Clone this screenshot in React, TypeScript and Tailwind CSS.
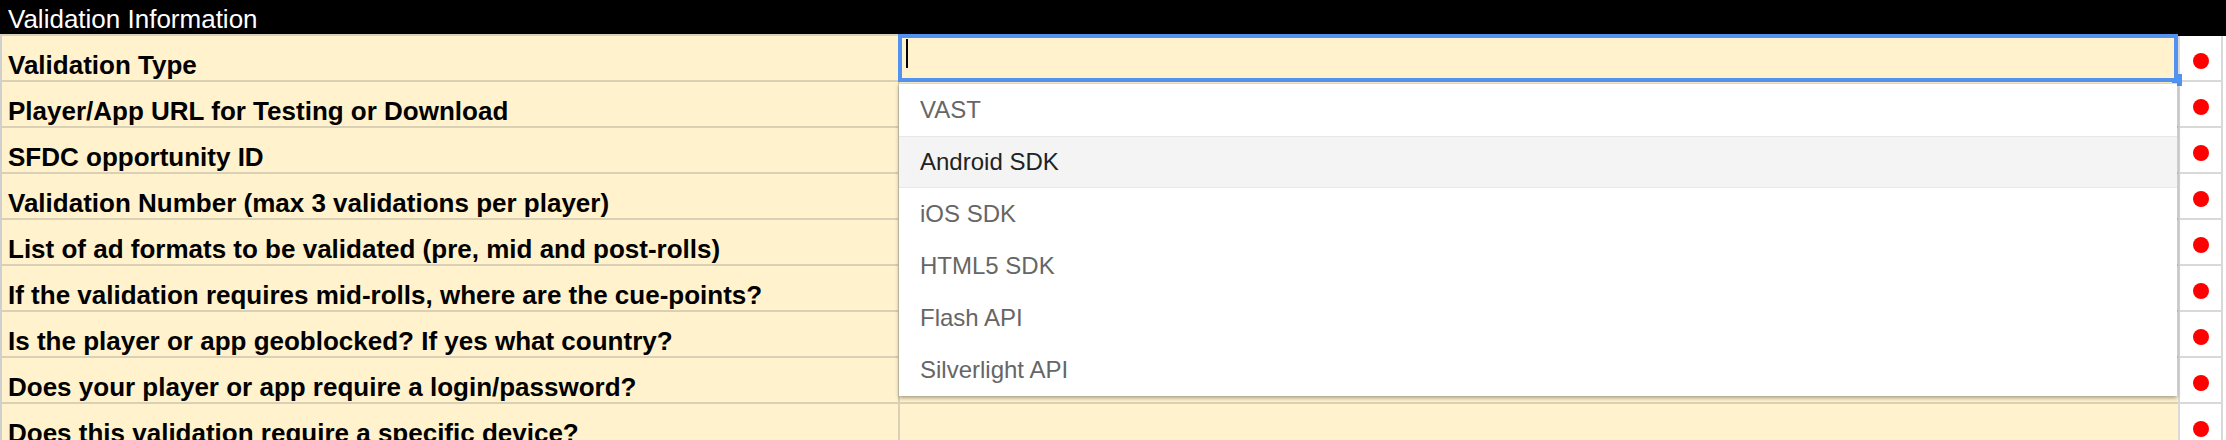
import React from 'react'

const labels = [
  'Validation Type',
  'Player/App URL for Testing or Download',
  'SFDC opportunity ID',
  'Validation Number (max 3 validations per player)',
  'List of ad formats to be validated (pre, mid and post-rolls)',
  'If the validation requires mid-rolls, where are the cue-points?',
  'Is the player or app geoblocked? If yes what country?',
  'Does your player or app require a login/password?',
  'Does this validation require a specific device?',
]

const options = ['VAST', 'Android SDK', 'iOS SDK', 'HTML5 SDK', 'Flash API', 'Silverlight API']

export default function App() {
  return (
    <div className="relative w-[2226px] h-[440px] overflow-hidden bg-white font-['Liberation_Sans',Arial,sans-serif]">
      {/* header */}
      <div className="flex h-[36px]">
        <div className="w-[2178px] h-[36px] bg-black border-b-2 border-[#d9d0b6] pl-[8px] pt-[4px] text-white text-[26px] leading-[30px]">
          Validation Information
        </div>
        <div className="flex-1 bg-black" />
      </div>

      {/* rows */}
      {labels.map((label) => (
        <div key={label} className="flex h-[46px]">
          <div className="w-[900px] shrink-0 bg-[#fff2cc] border-l-2 border-l-[#cfcfcf] border-r-2 border-r-[#d9d0b6] border-b-2 border-b-[#d9d0b6] flex items-end pl-[6px] text-[26px] leading-[30px] font-bold text-black whitespace-nowrap">
            {label}
          </div>
          <div className="w-[1278px] shrink-0 bg-[#fff2cc] border-b-2 border-[#d9d0b6]" />
          <div className="w-[45px] shrink-0 bg-white border-l-2 border-r-2 border-b-2 border-[#d9d9d9] flex justify-center pt-[17px]">
            <span className="block w-[16px] h-[16px] rounded-full bg-[#ff0000]" />
          </div>
        </div>
      ))}

      {/* fill handle */}
      <div className="absolute left-[2172px] top-[74px] w-[10px] h-[12px] bg-[#5292f0]" />

      {/* focused input */}
      <div className="absolute left-[898px] top-[34px] w-[1280px] h-[48px] bg-[#fff2cc] border-4 border-[#5292f0]">
        <div className="absolute left-[4px] top-[1px] w-[2px] h-[29px] bg-black" />
      </div>

      {/* dropdown */}
      <div className="absolute left-[899px] top-[83px] w-[1278px] bg-white border-t border-[#d6d6d6] shadow-[0_2px_4px_rgba(0,0,0,0.35)]">
        {options.map((opt, i) => (
          <div
            key={opt}
            className={
              i === 1
                ? 'h-[52px] bg-[#f4f4f4] border-y border-[#e8e8e8] pl-[21px] text-[24px] leading-[50px] text-[#222222]'
                : 'h-[52px] pl-[21px] text-[24px] leading-[52px] text-[#666666]'
            }
          >
            {opt}
          </div>
        ))}
      </div>
    </div>
  )
}
